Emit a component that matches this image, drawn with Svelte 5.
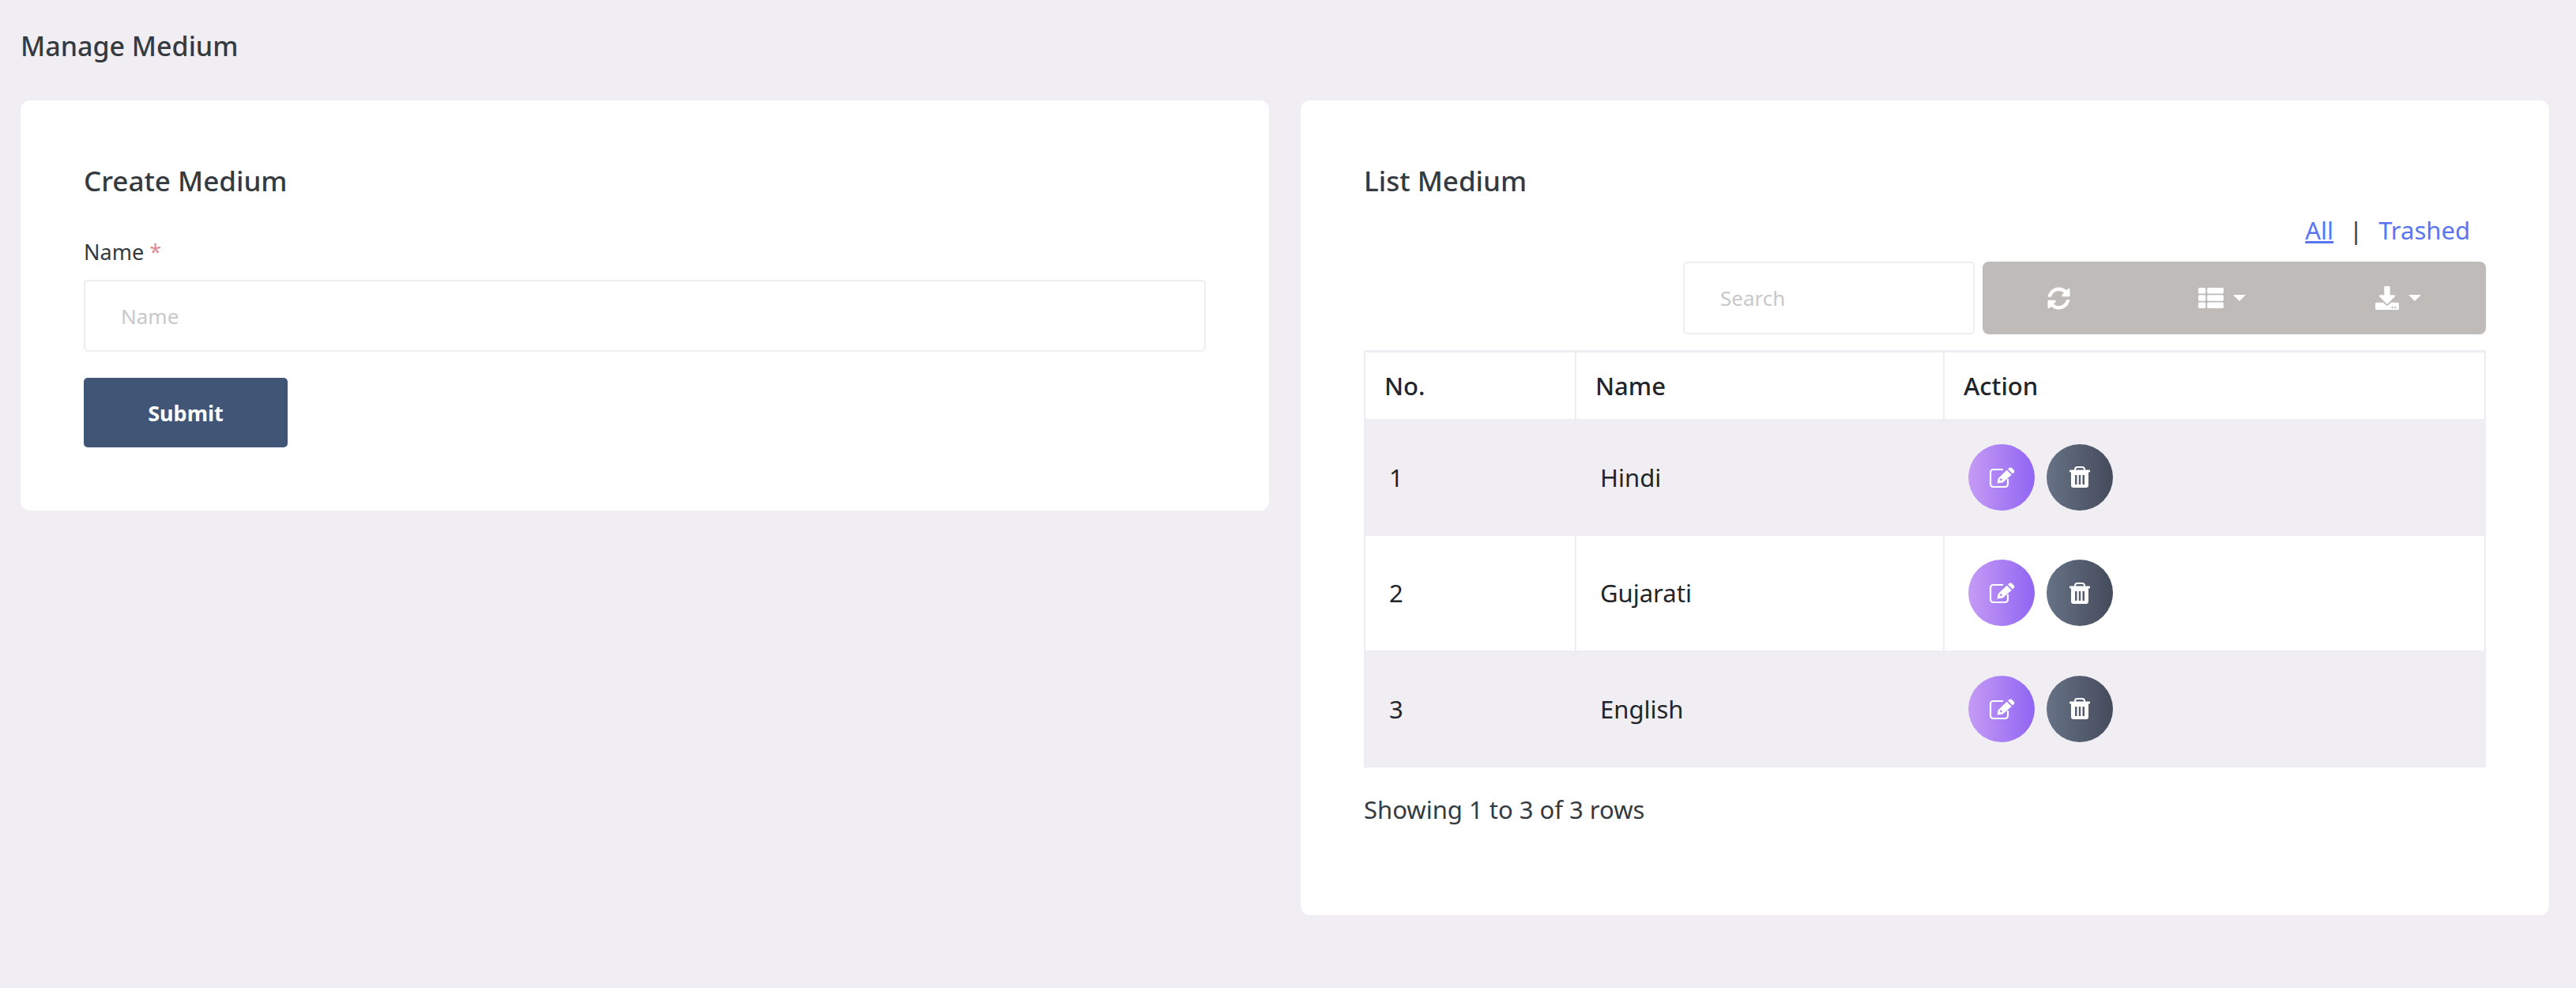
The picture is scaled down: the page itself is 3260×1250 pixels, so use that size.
<script>
  const rows = [
    { no: 1, name: 'Hindi' },
    { no: 2, name: 'Gujarati' },
    { no: 3, name: 'English' },
  ];
</script>

<div class="page">
  <h1 class="page-title">Manage Medium</h1>

  <div class="columns">
    <section class="card create">
      <h2 class="card-title">Create Medium</h2>
      <label class="field-label" for="medium-name">Name <span class="req">*</span></label>
      <input class="text-input" id="medium-name" placeholder="Name" />
      <button class="submit">Submit</button>
    </section>

    <section class="card list">
      <h2 class="card-title">List Medium</h2>
      <div class="tabs">
        <a class="active" href="#all">All</a>
        <span class="sep">|</span>
        <a href="#trashed">Trashed</a>
      </div>

      <div class="toolbar">
        <input class="search" placeholder="Search" />
        <div class="tools">
          <button class="tool" aria-label="Refresh">
            <svg class="tool-icon sync" viewBox="0 0 512 512"><path d="M370.72 133.28C339.458 104.008 298.888 87.962 255.848 88c-77.458.068-144.328 53.178-162.791 126.85-1.344 5.363-6.122 9.15-11.651 9.15H24.103c-7.498 0-13.194-6.807-11.807-14.176C33.933 94.924 134.813 8 256 8c66.448 0 126.791 26.136 171.315 68.685L463.03 40.97C478.149 25.851 504 36.559 504 57.941V192c0 13.255-10.745 24-24 24H345.941c-21.382 0-32.09-25.851-16.971-40.971l41.75-41.749zM32 296h134.059c21.382 0 32.09 25.851 16.971 40.971l-41.75 41.75c31.262 29.273 71.835 45.319 114.876 45.28 77.418-.07 144.315-53.144 162.787-126.849 1.344-5.363 6.122-9.15 11.651-9.15h57.304c7.498 0 13.194 6.807 11.807 14.176C478.067 417.076 377.187 504 256 504c-66.448 0-126.791-26.136-171.315-68.685L48.97 471.03C33.851 486.149 8 475.441 8 454.059V320c0-13.255 10.745-24 24-24z"/></svg>
          </button>
          <button class="tool" aria-label="Columns">
            <svg class="tool-icon" viewBox="0 0 512 512"><path d="M0 72a24 24 0 0 1 24-24h100a24 24 0 0 1 24 24v72a24 24 0 0 1-24 24H24a24 24 0 0 1-24-24zM0 220a24 24 0 0 1 24-24h100a24 24 0 0 1 24 24v72a24 24 0 0 1-24 24H24a24 24 0 0 1-24-24zM0 368a24 24 0 0 1 24-24h100a24 24 0 0 1 24 24v72a24 24 0 0 1-24 24H24a24 24 0 0 1-24-24zM180 72a24 24 0 0 1 24-24h284a24 24 0 0 1 24 24v72a24 24 0 0 1-24 24H204a24 24 0 0 1-24-24zM180 220a24 24 0 0 1 24-24h284a24 24 0 0 1 24 24v72a24 24 0 0 1-24 24H204a24 24 0 0 1-24-24zM180 368a24 24 0 0 1 24-24h284a24 24 0 0 1 24 24v72a24 24 0 0 1-24 24H204a24 24 0 0 1-24-24z"/></svg>
            <span class="caret"></span>
          </button>
          <button class="tool" aria-label="Export">
            <svg class="tool-icon download" viewBox="0 0 512 512"><path d="M216 0h80c13.3 0 24 10.7 24 24v168h87.7c17.8 0 26.7 21.5 14.1 34.1L269.7 378.3c-7.5 7.5-19.8 7.5-27.3 0L90.1 226.1c-12.6-12.6-3.7-34.1 14.1-34.1H192V24c0-13.3 10.7-24 24-24zm296 376v112c0 13.3-10.7 24-24 24H24c-13.3 0-24-10.7-24-24V376c0-13.3 10.7-24 24-24h146.7l49 49c20.1 20.1 52.5 20.1 72.6 0l49-49H488c13.3 0 24 10.7 24 24zm-124 88c0-11-9-20-20-20s-20 9-20 20 9 20 20 20 20-9 20-20zm64 0c0-11-9-20-20-20s-20 9-20 20 9 20 20 20 20-9 20-20z"/></svg>
            <span class="caret"></span>
          </button>
        </div>
      </div>

      <table class="data">
        <thead>
          <tr>
            <th class="col-no">No.</th>
            <th class="col-name">Name</th>
            <th>Action</th>
          </tr>
        </thead>
        <tbody>
          {#each rows as row}
            <tr>
              <td class="cell-no">{row.no}</td>
              <td class="cell-name">{row.name}</td>
              <td class="cell-action">
                <div class="actions">
                  <button class="round edit" aria-label="Edit">
                    <svg class="edit-icon" viewBox="0 0 33 26">
                      <path class="edit-box" d="M18 3H5.5A3.5 3.5 0 0 0 2 6.500V21.500A3.500 3.500 0 0 0 5.500 25H20.500A3.500 3.500 0 0 0 24 21.500V15" />
                      <path fill-rule="evenodd" d="M10.500 20.500L11.700 14.300L22.700 3.800L28.700 9.800L17.500 19.500ZM13.500 15.500L15.500 17.500L17 16L15 14ZM24 2.500L25.800 1A2.600 2.600 0 0 1 29 1.100L31.700 3.700A2.400 2.400 0 0 1 31.800 6.600L30 8.500Z" />
                    </svg>
                  </button>
                  <button class="round trash" aria-label="Delete">
                    <svg class="trash-icon" viewBox="0 0 26 27">
                      <path class="trash-handle" d="M7 5V4A3 3 0 0 1 10 1H16A3 3 0 0 1 19 4V5" />
                      <path fill-rule="evenodd" d="M1 4.500H25A1 1 0 0 1 26 5.500V6.500A1 1 0 0 1 25 7.500H24V24A3 3 0 0 1 21 27H5A3 3 0 0 1 2 24V7.500H1A1 1 0 0 1 0 6.500V5.500A1 1 0 0 1 1 4.500ZM7 11V23H9.500V11ZM11.800 11V23H14.200V11ZM16.500 11V23H19V11Z" />
                    </svg>
                  </button>
                </div>
              </td>
            </tr>
          {/each}
        </tbody>
      </table>

      <p class="summary">Showing 1 to 3 of 3 rows</p>
    </section>
  </div>
</div>

<style>
  :global(body) {
    margin: 0;
    background: #f0eef3;
  }

  .page {
    box-sizing: border-box;
    height: 1250px;
    padding: 35px 34px 0 26px;
    font-family: 'Noto Sans', 'Open Sans', sans-serif;
    color: #343a40;
  }

  .page-title {
    margin: 0 0 46px;
    font-size: 34px;
    line-height: 46px;
    font-weight: 500;
  }

  .columns {
    display: grid;
    grid-template-columns: 1580px 1580px;
    gap: 40px;
    align-items: start;
  }

  .card {
    box-sizing: border-box;
    background: #fff;
    border-radius: 12px;
    padding: 78px 80px 0;
  }

  .create {
    height: 519px;
  }

  .list {
    height: 1031px;
  }

  .card-title {
    margin: 0;
    font-size: 35px;
    line-height: 48px;
    font-weight: 500;
  }

  .field-label {
    display: block;
    margin-top: 47px;
    font-size: 27px;
    line-height: 38px;
  }

  .req {
    color: #e08a94;
  }

  .text-input {
    display: block;
    box-sizing: border-box;
    width: 100%;
    height: 91px;
    margin-top: 16px;
    padding: 0 45px;
    border: 2px solid #eeedf3;
    border-radius: 5px;
    font: inherit;
    font-size: 26px;
    outline: none;
  }

  .text-input::placeholder,
  .search::placeholder {
    color: #c8c8ca;
    opacity: 1;
  }

  .submit {
    display: block;
    width: 258px;
    height: 88px;
    margin-top: 33px;
    border: 0;
    border-radius: 5px;
    background: #415576;
    color: #fff;
    font: inherit;
    font-size: 27px;
    font-weight: 700;
  }

  .tabs {
    display: flex;
    justify-content: flex-end;
    gap: 20px;
    margin-top: 15px;
    padding-right: 20px;
    font-size: 31px;
    line-height: 46px;
  }

  .tabs a {
    color: #5a74f0;
    text-decoration: none;
  }

  .tabs a.active {
    text-decoration: underline;
  }

  .sep {
    color: #343a40;
  }

  .toolbar {
    display: flex;
    justify-content: flex-end;
    gap: 10px;
    margin-top: 17px;
  }

  .search {
    box-sizing: border-box;
    width: 369px;
    height: 92px;
    padding: 0 45px;
    border: 2px solid #eeedf3;
    border-radius: 5px;
    font: inherit;
    font-size: 26px;
    outline: none;
  }

  .tools {
    display: grid;
    grid-template-columns: 192px 222px 223px;
    width: 637px;
    height: 92px;
    border-radius: 8px;
    background: #bfbbb9;
  }

  .tool {
    display: flex;
    align-items: center;
    justify-content: center;
    gap: 12px;
    border: 0;
    padding: 0;
    background: none;
  }

  .tool-icon {
    width: 32px;
    height: 32px;
    fill: #fff;
  }

  .tool-icon.sync {
    width: 29px;
    height: 29px;
  }

  .tool-icon.download {
    width: 30px;
    height: 30px;
  }

  .caret {
    width: 0;
    height: 0;
    border-top: 8px solid #fff;
    border-left: 8px solid transparent;
    border-right: 8px solid transparent;
  }

  .data {
    width: 1420px;
    margin-top: 20px;
    border-collapse: collapse;
    table-layout: fixed;
    color: #212529;
    font-size: 31px;
    border-top: 3px solid #eeedf3;
  }

  .data th,
  .data td {
    box-sizing: border-box;
    border: 2px solid #eeedf3;
    text-align: left;
  }

  .data th {
    height: 86px;
    padding: 0 24px;
    font-weight: 500;
  }

  .col-no {
    width: 267px;
  }

  .col-name {
    width: 466px;
  }

  .data td {
    height: 146.5px;
    padding: 0 25px 0 30px;
    font-weight: 400;
  }

  .data tbody tr:nth-child(odd) {
    background: #f0eef3;
  }

  .data .cell-no {
    padding-left: 30px;
  }

  .data .cell-action {
    padding: 0 0 0 30px;
  }

  .actions {
    display: flex;
    gap: 15px;
  }

  .round {
    display: flex;
    align-items: center;
    justify-content: center;
    width: 84px;
    height: 84px;
    padding: 0;
    border: 0;
    border-radius: 50%;
  }

  .edit {
    background: linear-gradient(90deg, #c59bf5, #9065f3);
  }

  .trash {
    background: linear-gradient(90deg, #677286, #444b5b);
  }

  .edit-icon {
    width: 33px;
    height: 26px;
    fill: #fff;
  }

  .edit-box {
    fill: none;
    stroke: #fff;
    stroke-width: 2.2;
  }

  .trash-icon {
    width: 26px;
    height: 27px;
    fill: #fff;
  }

  .trash-handle {
    fill: none;
    stroke: #fff;
    stroke-width: 2;
  }

  .summary {
    margin: 30px 0 0;
    font-size: 31px;
    line-height: 46px;
    color: #343a40;
  }
</style>
